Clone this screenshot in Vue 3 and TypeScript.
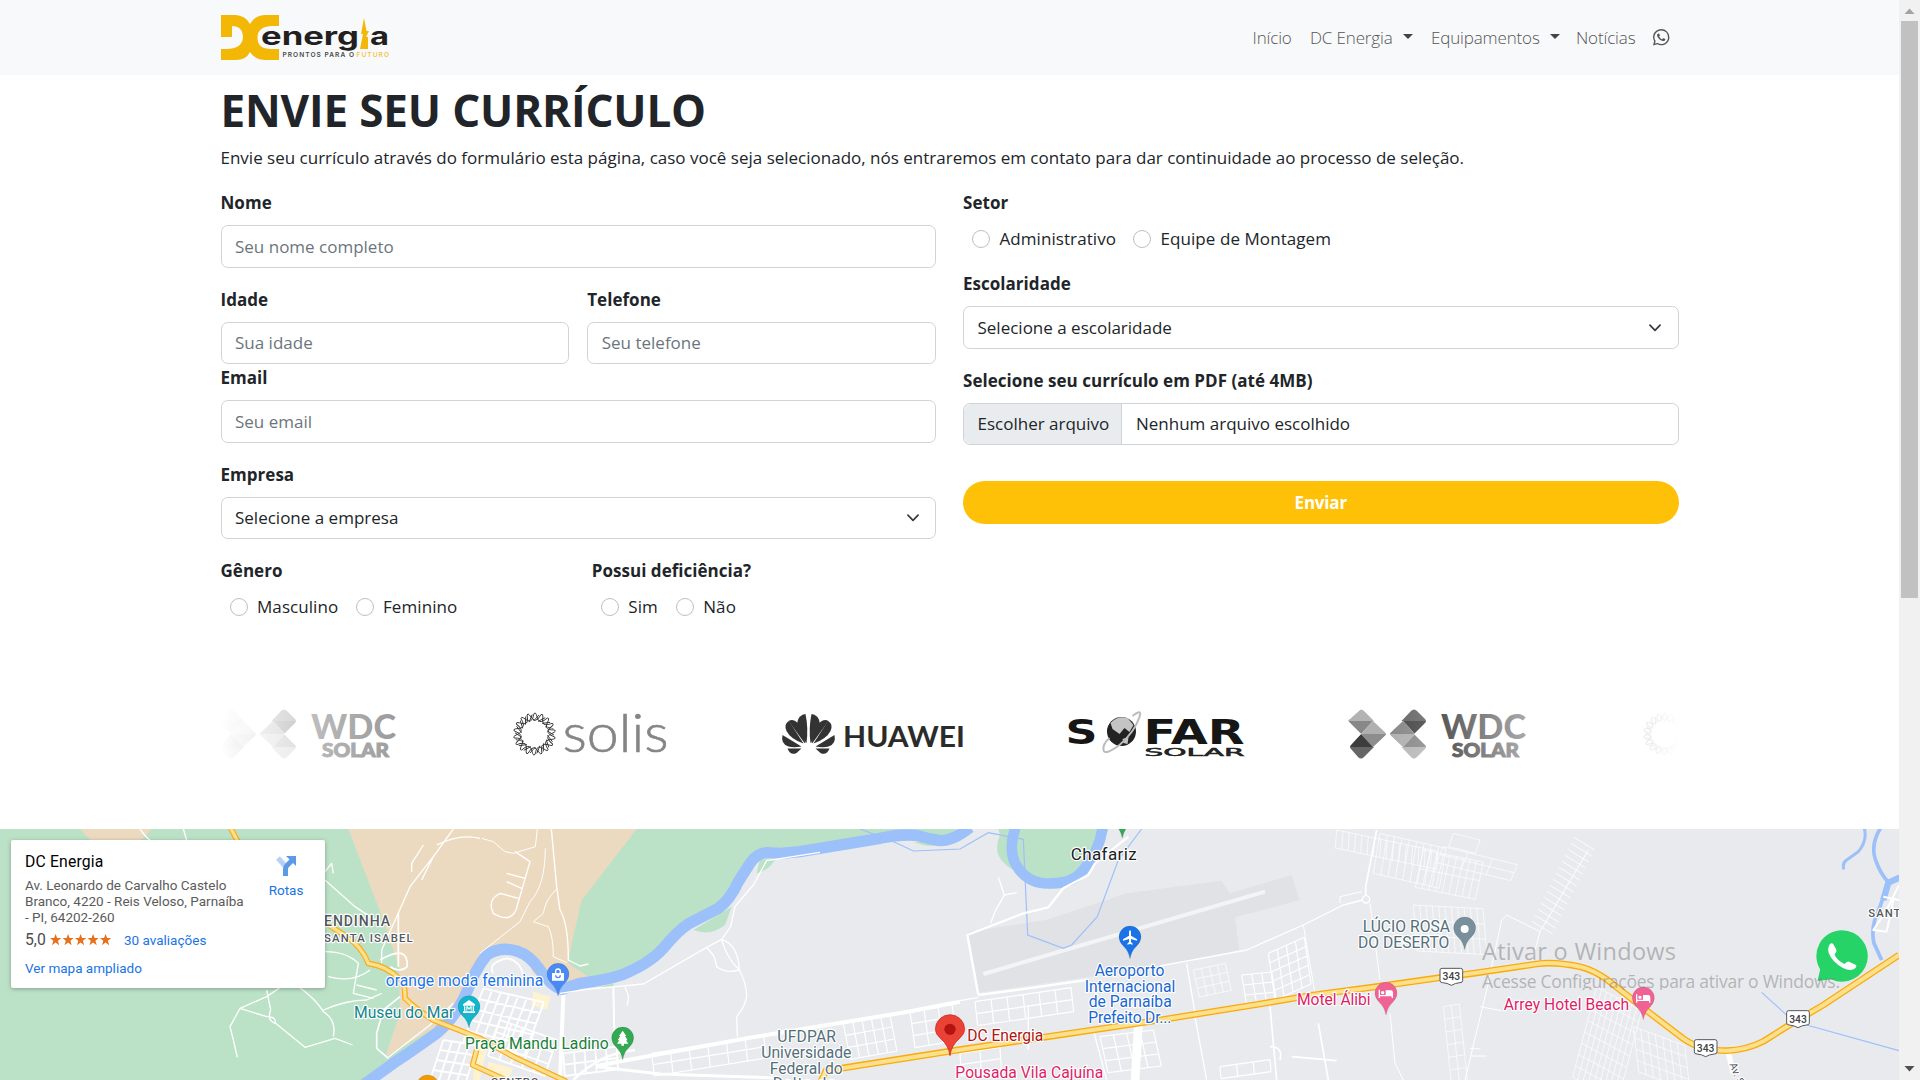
<script setup lang="ts">
interface Label {
  t: string
  x: number
  y: number
  w: number
  c: string
  s?: number
  b?: number
}

const highway =
  'M2460 790 L2478 752 L2880 689 L3130 652 L3480 600 L3780 552 L3940 525 L4130 500 L4320 473 L4420 460 L4610 432 Q4660 424 4740 440 Q4780 450 4820 478 L4940 572 L5050 656 Q5100 692 5180 692 Q5240 690 5290 664 L5360 620 L5470 555 L5697 405'

const oldRoads = [
  'M690 20 L716 70',
  'M975 308 L1040 350 Q1085 380 1105 430 Q1160 438 1200 478 Q1216 490 1215 535 Q1250 570 1300 600 L1440 655 L1540 710 L1700 785',
  'M1430 690 L1418 735 L1540 790',
]

const river =
  'M2910 22 Q2860 62 2820 62 Q2780 55 2750 46 Q2700 42 2640 55 L2400 95 L2340 100 L2300 98 Q2270 100 2250 130 L2215 185 Q2190 240 2155 265 L2065 312 Q2030 335 1990 385 Q1950 430 1870 463 Q1820 480 1740 490 L1685 508 Q1655 500 1620 450 Q1590 405 1550 393 Q1500 378 1460 405 Q1425 450 1405 505 Q1370 590 1310 640 Q1240 690 1180 730 L1090 795'

function grid(x: number, y: number, cols: number, rows: number, ax: number, ay: number, bx: number, by: number): string {
  let d = ''
  for (let i = 0; i <= cols; i++) d += `M${x + i * ax} ${y + i * ay}l${rows * bx} ${rows * by}`
  for (let j = 0; j <= rows; j++) d += `M${x + j * bx} ${y + j * by}l${cols * ax} ${cols * ay}`
  return d
}

const cityBlocks = [
  grid(1450, 505, 7, 5, 26, 6, -12, 32),
  grid(1330, 660, 4, 4, 26, 4, -10, 30),
  grid(1500, 600, 5, 3, 34, 12, -12, 36),
  grid(1690, 700, 5, 2, 32, -4, 2, 34),
]

const townBlocks = [
  grid(1955, 700, 6, 2, 56, -9, 4, 34),
  grid(2530, 610, 5, 3, 28, -5, 7, 36),
  grid(2730, 575, 3, 3, 42, -7, 5, 36),
  grid(2925, 545, 6, 2, 48, -7, 4, 36),
  grid(3300, 650, 4, 3, 40, -5, 8, 36),
  grid(2880, 700, 2, 2, 60, -9, 2, 34),
  grid(3725, 465, 3, 3, 30, -3, 5, 30),
  grid(3805, 400, 4, 5, 27, -12, 4, 28),
  grid(3660, 740, 3, 1, 50, -7, 3, 36),
]

const fineBlocks = [
  grid(4010, 30, 16, 1, 19, 4, -4, 54),
  grid(4140, 40, 9, 1, 22, 5, -20, 120),
  grid(4270, 90, 9, 2, 20, 4, -12, 56),
  grid(4360, 40, 1, 1, 80, 20, -14, 40),
  grid(4330, 80, 3, 2, 74, 18, -10, 24),
  grid(4240, 255, 11, 3, 19, 1, 4, 46),
  grid(3580, 450, 4, 3, 24, -5, 6, 27),
  grid(4790, 500, 9, 8, 15, 8, -9, 34),
  grid(4900, 620, 7, 4, 22, 8, 4, 34),
  grid(4330, 560, 2, 6, 24, -4, 4, 38),
]

const ribs = Array.from({ length: 15 }, (_, i) => `M${4722 - i * 9} ${52 + i * 18}l62 38`).join('')

const whiteRoads: { d: string; w: number }[] = [
  { d: 'M1790 738 L1870 722 L2240 655 L2500 612 L2720 576 L2880 545', w: 12 },
  { d: 'M1790 740 L1980 762 L2330 774', w: 9 },
  { d: 'M1680 520 L1760 508 L1930 492 L2120 382 L2165 358 L2192 320 L2205 260 L2260 195 L2300 122 L2460 97', w: 4 },
  { d: 'M2118 382 Q2145 400 2150 440 Q2180 462 2218 450 Q2180 415 2165 358 M2165 358 Q2215 375 2218 450 Q2240 490 2240 530 Q2235 560 2210 590 L2212 650', w: 4 },
  { d: 'M1840 500 L1843 640', w: 6 },
  { d: 'M1690 525 L1680 780', w: 12 },
  { d: 'M1720 780 Q1800 700 1905 690', w: 8 },
  { d: 'M1875 500 L1886 530 L1882 556', w: 4 },
  { d: 'M1654 27 L1670 200 L1680 270 Q1705 310 1705 420 L1740 438 L1765 432', w: 4 },
  { d: 'M1612 27 L1606 80 L1540 100 L1515 95 L1480 65 L1445 55', w: 3 },
  { d: 'M1636 85 Q1635 200 1590 245 L1560 305 L1440 400', w: 3 },
  { d: 'M1672 205 Q1635 240 1630 280 L1600 305 L1645 320 Q1660 350 1660 410 L1700 428', w: 3 },
  { d: 'M1545 95 L1590 125 L1548 270 Q1530 310 1480 280 Q1460 240 1500 220 L1555 235 M1520 160 L1575 175 M1520 185 L1565 205', w: 4 },
  { d: 'M1480 460 Q1460 430 1520 415 Q1560 420 1570 465', w: 5 },
  { d: 'M1360 27 L1300 110 L1230 200 L1190 290 L1145 390 L1145 430 M1270 75 L1235 130 L1235 155 M1300 110 L1265 180 M1440 55 Q1380 40 1310 75', w: 4 },
  { d: 'M420 27 Q440 55 455 65 M550 27 L560 60', w: 4 },
  { d: 'M975 155 L995 130 L1000 160 M975 180 L1065 260 L1140 310', w: 4 },
  { d: 'M1165 715 L1130 685 L1130 640 L1150 570 L1200 530', w: 5 },
  { d: 'M1165 712 L1290 615 L1360 550', w: 4 },
  { d: 'M840 503 L800 530 L720 565 L690 620 L700 660 L712 712 M720 565 L800 590 Q830 590 825 610 Q800 600 812 570 L800 510', w: 4 },
  { d: 'M825 608 L915 682 L1005 655 L1058 675 M900 503 Q950 540 970 575 Q1010 600 1000 650 M970 570 Q1040 540 1100 540 L1145 520', w: 4 },
  { d: 'M975 395 Q1040 395 1075 430 L1060 520 L1120 535 M985 470 Q1060 490 1110 450 M1070 495 L1130 510', w: 4 },
  { d: 'M1140 420 Q1225 370 1222 440 Q1200 460 1170 440 M1195 440 L1195 280', w: 5 },
  { d: 'M2935 525 L2902 345 L3070 280 L3145 262 L3190 205 L3265 165 L3285 130 L3385 50', w: 7 },
  { d: 'M2935 525 L3100 503 L3260 480', w: 7 },
  { d: 'M2880 542 L2935 532 M3480 438 L3740 390 L3910 315 L4030 255 L4100 237', w: 4 },
  { d: 'M2972 310 L2985 275 L3013 225 L2995 172 M3013 225 L3050 218', w: 4 },
  { d: 'M3415 615 L3405 785', w: 26 },
  { d: 'M3280 630 L3320 780 M3085 560 L3085 690 M3585 590 L3620 780 M3560 430 L3585 580', w: 4 },
  { d: 'M3810 560 L3830 780 M3955 610 L3985 780 M3875 710 L4010 722 M3810 680 Q3850 680 3840 720', w: 5 },
  { d: 'M4130 30 L4097 200 L4097 225', w: 5 },
  { d: 'M4110 250 L4140 480 M4170 580 L4185 730 L4210 780 M4020 230 L4085 215 M4020 230 L4020 250 M3910 315 L3945 520', w: 3 },
  { d: 'M4520 285 L4505 300 L4460 510 L4395 780 M4520 285 L4620 335 L4595 430 M4620 335 L4765 90', w: 3 },
  { d: 'M4410 708 L4460 708 M4410 685 L4440 687 M4440 560 L4505 572', w: 3 },
  { d: 'M5185 700 L5200 760', w: 16 },
  { d: 'M5697 195 L5660 270 L5620 330 L5660 335 L5680 240 M5650 230 L5697 240 M5640 280 L5697 290', w: 6 },
]

const blue = '#1a73e8'
const pink = '#e01e68'
const labels: Label[] = [
  { t: 'ENDINHA', x: 972, y: 318, w: 198, c: '#54595f', s: 42, b: 500 },
  { t: 'SANTA ISABEL', x: 972, y: 366, w: 266, c: '#54595f', s: 34, b: 500 },
  { t: 'orange moda feminina', x: 1157, y: 498, w: 473, c: blue },
  { t: 'Museu do Mar', x: 1062, y: 595, w: 301, c: '#12858d' },
  { t: 'Praça Mandu Ladino', x: 1395, y: 688, w: 431, c: '#188038' },
  { t: 'CENTRO', x: 1472, y: 799, w: 144, c: '#54595f', s: 34, b: 500 },
  { t: 'UFDPAR', x: 2332, y: 667, w: 176, c: '#546e7a' },
  { t: 'Universidade', x: 2284, y: 714, w: 270, c: '#546e7a' },
  { t: 'Federal do', x: 2309, y: 761, w: 219, c: '#546e7a' },
  { t: 'Delta do', x: 2318, y: 808, w: 190, c: '#546e7a' },
  { t: 'DC Energia', x: 2902, y: 663, w: 228, c: '#b31412' },
  { t: 'Pousada Vila Cajuína', x: 2866, y: 775, w: 444, c: pink },
  { t: 'Chafariz', x: 3212, y: 120, w: 198, c: '#202124', s: 51 },
  { t: 'Aeroporto', x: 3284, y: 468, w: 209, c: '#1967d2' },
  { t: 'Internacional', x: 3254, y: 515, w: 272, c: '#1967d2' },
  { t: 'de Parnaíba', x: 3266, y: 562, w: 249, c: '#1967d2' },
  { t: 'Prefeito Dr...', x: 3265, y: 609, w: 249, c: '#1967d2' },
  { t: 'Motel Álibi', x: 3891, y: 555, w: 221, c: pink },
  { t: 'LÚCIO ROSA', x: 4088, y: 337, w: 262, c: '#546e7a' },
  { t: 'DO DESERTO', x: 4074, y: 384, w: 274, c: '#546e7a' },
  { t: 'Arrey Hotel Beach', x: 4511, y: 570, w: 376, c: pink },
  { t: 'SANTO', x: 5605, y: 292, w: 122, c: '#54595f', s: 34, b: 500 },
]

const pins: { x: number; y: number; c: string; k: string }[] = [
  { x: 1407, y: 560, c: '#12b5cb', k: 'museum' },
  { x: 1674, y: 463, c: '#4a8af4', k: 'bag' },
  { x: 1868, y: 654, c: '#34a853', k: 'tree' },
  { x: 3390, y: 351, c: '#1a73e8', k: 'plane' },
  { x: 4158, y: 520, c: '#f06292', k: 'bed' },
  { x: 4930, y: 534, c: '#f06292', k: 'bed' },
  { x: 4394, y: 324, c: '#78909c', k: 'dot' },
  { x: 3367, y: -11, c: '#34a853', k: '' },
  { x: 1283, y: 798, c: '#f29900', k: '' },
]

const shields = [
  { x: 4354, y: 470 },
  { x: 5117, y: 684 },
  { x: 5394, y: 597 },
]

const sunRays = Array.from({ length: 18 }, (_, i) => i * 20)
</script>

<template>
  <div class="window">
    <div class="page">
      <header class="navbar">
        <div class="container nav-row">
          <svg class="brand" viewBox="0 0 168 45" role="img" aria-label="DC Energia">
            <path
              fill="#f3b705"
              d="M0 0H15Q25 1 29 9Q34 0 45 0H58V11H50Q36.500 12 36.500 22.500Q36.500 34 50 34H58V45H45Q34 45 29 37Q25 45 15 45H0V34H5Q21.500 34 22 22Q21.500 11 11 11V22H0Z"
            />
            <text x="40" y="30" class="brand-name" textLength="98" lengthAdjust="spacingAndGlyphs">energ</text>
            <path fill="#f3b705" d="M143 3L140 19H142L139 34H147V22H145L148 16H145.500Z" />
            <text x="149" y="30" class="brand-name" textLength="19" lengthAdjust="spacingAndGlyphs">a</text>
            <text x="61.500" y="42" class="brand-tag" textLength="71.500">PRONTOS PARA O</text>
            <text x="135.500" y="42" class="brand-tag gold" textLength="32.500">FUTURO</text>
          </svg>
          <nav class="links">
            <a class="link l1">Início</a>
            <a class="link l2">DC Energia<i class="caret"></i></a>
            <a class="link l3">Equipamentos<i class="caret"></i></a>
            <a class="link l4">Notícias</a>
            <svg class="wa-mini" viewBox="0 0 16 16" fill="#555">
              <path
                d="M13.601 2.326A7.854 7.854 0 0 0 7.994 0C3.627 0 .068 3.558.064 7.926c0 1.399.366 2.760 1.057 3.965L0 16l4.204-1.102a7.933 7.933 0 0 0 3.790.965h.004c4.368 0 7.926-3.558 7.930-7.930A7.898 7.898 0 0 0 13.600 2.326zM7.994 14.521a6.573 6.573 0 0 1-3.356-.920l-.240-.144-2.494.654.666-2.433-.156-.251a6.560 6.560 0 0 1-1.007-3.505c0-3.626 2.957-6.584 6.591-6.584a6.560 6.560 0 0 1 4.660 1.931 6.557 6.557 0 0 1 1.928 4.660c-.004 3.639-2.961 6.592-6.592 6.592zm3.615-4.934c-.197-.099-1.170-.578-1.353-.646-.182-.065-.315-.099-.445.099-.133.197-.513.646-.627.775-.114.133-.232.148-.430.050-.197-.100-.836-.308-1.592-.985-.590-.525-.985-1.175-1.103-1.372-.114-.198-.011-.304.088-.403.087-.088.197-.232.296-.346.100-.114.133-.198.198-.330.065-.134.034-.248-.015-.347-.050-.099-.445-1.076-.612-1.470-.160-.389-.323-.335-.445-.340-.114-.007-.247-.007-.380-.007a.729.729 0 0 0-.529.247c-.182.198-.691.677-.691 1.654 0 .977.710 1.916.810 2.049.098.133 1.394 2.132 3.383 2.992.470.205.840.326 1.129.418.475.152.904.129 1.246.080.380-.058 1.171-.480 1.338-.943.164-.464.164-.860.114-.943-.049-.084-.182-.133-.380-.232z"
              />
            </svg>
          </nav>
        </div>
      </header>

      <main class="container content">
        <h1>ENVIE SEU CURRÍCULO</h1>
        <p class="lead">Envie seu currículo através do formulário esta página, caso você seja selecionado, nós entraremos em contato para dar continuidade ao processo de seleção.</p>
        <form class="columns">
          <section class="col">
            <div class="field">
              <label>Nome</label>
              <input class="control" placeholder="Seu nome completo" />
            </div>
            <div class="pair">
              <div>
                <label>Idade</label>
                <input class="control" placeholder="Sua idade" />
              </div>
              <div>
                <label>Telefone</label>
                <input class="control" placeholder="Seu telefone" />
              </div>
            </div>
            <div class="field">
              <label>Email</label>
              <input class="control" placeholder="Seu email" />
            </div>
            <div class="field">
              <label>Empresa</label>
              <div class="control select">
                <span>Selecione a empresa</span>
                <svg viewBox="0 0 16 16"><path d="m2 5 6 6 6-6" /></svg>
              </div>
            </div>
            <div class="halves">
              <div>
                <label>Gênero</label>
                <div class="radios">
                  <span class="opt w126"><i></i>Masculino</span>
                  <span class="opt"><i></i>Feminino</span>
                </div>
              </div>
              <div>
                <label>Possui deficiência?</label>
                <div class="radios">
                  <span class="opt w75"><i></i>Sim</span>
                  <span class="opt"><i></i>Não</span>
                </div>
              </div>
            </div>
          </section>
          <section class="col">
            <div class="field">
              <label>Setor</label>
              <div class="radios">
                <span class="opt w161"><i></i>Administrativo</span>
                <span class="opt"><i></i>Equipe de Montagem</span>
              </div>
            </div>
            <div class="field">
              <label>Escolaridade</label>
              <div class="control select">
                <span>Selecione a escolaridade</span>
                <svg viewBox="0 0 16 16"><path d="m2 5 6 6 6-6" /></svg>
              </div>
            </div>
            <div class="field">
              <label>Selecione seu currículo em PDF (até 4MB)</label>
              <div class="control file">
                <span class="pick">Escolher arquivo</span>
                <span class="none">Nenhum arquivo escolhido</span>
              </div>
            </div>
            <button type="button" class="send">Enviar</button>
          </section>
        </form>
      </main>

      <div class="container partners">
        <svg class="logos" viewBox="220.500 690 1458 90">
          <defs>
            <linearGradient id="fadeL" gradientUnits="userSpaceOnUse" x1="220" x2="512" y1="0" y2="0">
              <stop offset="0" stop-color="#fff" />
              <stop offset="1" stop-color="#fff" stop-opacity="0" />
            </linearGradient>
            <linearGradient id="fadeR" gradientUnits="userSpaceOnUse" x1="1387" x2="1679" y1="0" y2="0">
              <stop offset="0" stop-color="#fff" stop-opacity="0" />
              <stop offset="1" stop-color="#fff" />
            </linearGradient>
            <linearGradient id="ink" x1="0" x2="1" y1="0" y2="0">
              <stop offset="0" stop-color="#303030" />
              <stop offset="1" stop-color="#5a5a5a" />
            </linearGradient>
            <clipPath id="wdcClip">
              <path d="M3 26L-1 22Q-3 20 0 19L9 11Q11 8 14 11L35 32Q37 34 35 36L14 57Q11 60 8 57L1 49Q-1 47 1 45L11 34ZM75 19Q77 21 75 23L64 34L75 45Q77 47 75 49L67 57Q64 60 61 57L41 36Q39 34 41 32L61 11Q64 8 67 11Z" />
            </clipPath>
            <g id="wdc">
              <g clip-path="url(#wdcClip)">
                <path fill="#b3b3b3" d="M-2 8H25V21H-2Z" />
                <path fill="#888" d="M-2 21H23L11 34Z" />
                <path fill="#b0b0b0" d="M23 21L37 34H11Z" />
                <path fill="#8d8d8d" d="M11 34H37L23 47Z" />
                <path fill="#3d3d3d" d="M11 34L23 47H-3Z" />
                <path fill="#666" d="M-2 47H25V60H-2Z" />
                <path fill="#666" d="M50 8H79V21H50Z" />
                <path fill="#464646" d="M53 21H79L65 34Z" />
                <path fill="#888" d="M53 21L39 34H65Z" />
                <path fill="#b0b0b0" d="M39 34H65L53 47Z" />
                <path fill="#8a8a8a" d="M65 34L53 47H79Z" />
                <path fill="#b8b8b8" d="M50 47H79V60H50Z" />
              </g>
              <text x="91" y="39" class="wdc-a" textLength="85" lengthAdjust="spacingAndGlyphs">WDC</text>
              <text x="102" y="57" class="wdc-b" textLength="67" lengthAdjust="spacingAndGlyphs">SOLAR</text>
            </g>
            <g id="sun" fill="none" stroke="#333" stroke-width=".9">
              <path v-for="a in sunRays" :key="a" :transform="`rotate(${a})`" d="M-4 -13Q-1.500 -14 -.500 -20.500Q1 -22 1.800 -19.500Q3 -14 5 -12.500M-1 -13L4.500 -19" />
            </g>
          </defs>
          <use href="#wdc" x="219.500" y="700" />
          <use href="#sun" x="534" y="734" />
          <text x="562" y="751.500" class="solis" textLength="106" lengthAdjust="spacingAndGlyphs">solis</text>
          <g fill="#333">
            <path d="M804 743L788 721Q793 718 798 724L805 743Z" />
            <g v-for="m in ['1 0 0 1 0 0', '-1 0 0 1 1616 0']" :key="m" :transform="`matrix(${m.split(' ').join(',')})`">
              <path d="M806 743C797 734 794 724 799 717Q802 714 805 714Q808 728 806 743Z" />
              <path d="M803 743.500L788.500 721Q783 724 786 731Q790 739 803 743.500Z" />
              <path d="M801 746.500L782 735Q780 744 788 746.500Q793 748 801 746.500Z" />
              <path d="M801 748.500H787Q790 756 796 753Z" />
            </g>
            <path d="M812 743L828 721Q823 718 818 724L811 743Z" />
          </g>
          <text x="842.500" y="747" class="huawei" textLength="122" lengthAdjust="spacingAndGlyphs">HUAWEI</text>
          <text x="1065" y="744" class="sofar" textLength="32" lengthAdjust="spacingAndGlyphs">S</text>
          <circle cx="1121" cy="731.500" r="14.500" fill="#222" />
          <path fill="#c4c4c4" d="M1110 723Q1117 715 1127 718L1133 725L1129 732L1124 728L1119 734L1112 729ZM1122 739L1128 737L1127 744L1123 743Z" />
          <path fill="none" stroke="#bbb" stroke-width="2" d="M1132 716Q1142 708 1139 717Q1134 732 1119 745Q1104 756 1103 750Q1102 744 1109 738" />
          <text x="1143" y="744" class="sofar" textLength="101" lengthAdjust="spacingAndGlyphs">FAR</text>
          <text x="1144" y="756" class="sofar-b" textLength="100" lengthAdjust="spacingAndGlyphs">SOLAR</text>
          <use href="#wdc" x="1349.500" y="700" />
          <use href="#sun" x="1664" y="734" />
          <rect x="220" y="690" width="292" height="90" fill="url(#fadeL)" />
          <rect x="1387" y="690" width="292" height="90" fill="url(#fadeR)" />
        </svg>
      </div>

      <section class="map">
        <svg class="tiles" viewBox="0 27 5697 753">
          <path fill="#e8eaed" d="M0 0H5697V790H0Z" />
          <path fill="#bbe2c6" d="M0 0H2910L2820 62L2700 42L2400 95L2300 98L2215 185L2155 265L2065 312L1990 385L1870 463L1740 490L1685 508L1620 450L1550 393L1460 405L1405 505L1310 640L1090 795H0Z" />
          <path fill="#bbe2c6" d="M2080 330Q2130 350 2175 315L2195 260ZM2270 160Q2310 150 2325 118H2280ZM2740 65Q2800 90 2850 65ZM1800 500H1840V490Z" />
          <path fill="#ecdac0" d="M240 27H455L430 55L350 90L270 60ZM1045 27L1150 300L1197 440L1200 580L1155 712L1300 625L1380 545L1440 420L1500 370L1560 380L1600 460L1650 500L1765 470L1705 430L1715 370L1745 240L1910 27Z" />
          <path fill="#bbe2c6" d="M2995 27H3325Q3280 180 3140 190Q3080 180 3040 150Q2970 110 3000 45Z" />
          <path fill="#e1e2e5" d="M2905 335L3140 300L3380 220L3665 182L3690 220L3875 165L3900 240L3705 292L3718 390L3520 435L2935 518Z" />
          <path d="M2950 462L3795 215" stroke="#f3f4f5" stroke-width="12" />
          <g fill="none" stroke="#9cc0f9">
            <path :d="river" stroke-width="34" />
            <path d="M3047 20Q3020 100 3055 145Q3090 195 3155 190Q3220 190 3250 150Q3300 90 3308 20" stroke-width="32" />
            <path d="M2580 27L2670 60L2740 93L2880 87L2965 38L3070 58L3083 345L3190 385L3215 375L3292 290L3355 120L3425 27" stroke-width="3.500" />
            <path d="M5285 517L5365 590M5420 615L5697 692" stroke-width="3.500" />
            <path d="M5592 22Q5604 60 5575 95L5540 120Q5525 130 5532 148" stroke-width="9" />
            <path d="M5643 22Q5612 70 5625 115Q5640 160 5665 187L5640 260Q5610 320 5622 370L5645 420" stroke-width="11" />
            <path d="M5700 172L5665 188L5650 240" stroke-width="19" />
          </g>
          <path fill="#fef3d0" d="M1600 515L1652 530L1640 570L1595 555ZM1440 650L1460 690L1440 780H1420V700ZM1465 725L1540 745L1525 775L1460 760Z" />
          <g fill="none" stroke="#fff">
            <path v-for="(d, i) in cityBlocks" :key="'c' + i" :d="d" stroke-width="5.500" />
            <path v-for="(d, i) in townBlocks" :key="'t' + i" :d="d" stroke-width="3.500" />
            <path v-for="(d, i) in fineBlocks" :key="'f' + i" :d="d" stroke-width="2" />
            <path :d="ribs" stroke-width="2.500" />
            <path v-for="(r, i) in whiteRoads" :key="'w' + i" :d="r.d" :stroke-width="r.w" stroke-linejoin="round" />
            <circle cx="4098" cy="238" r="11" stroke-width="4" fill="#e8eaed" />
          </g>
          <g fill="none" stroke-linejoin="round">
            <path v-for="(d, i) in oldRoads" :key="'o' + i" :d="d" stroke="#f9ab1a" stroke-width="17" />
            <path v-for="(d, i) in oldRoads" :key="'p' + i" :d="d" stroke="#fddf8c" stroke-width="10" />
            <path :d="highway" stroke="#f9ab0a" stroke-width="20" />
            <path :d="highway" stroke="#fde08e" stroke-width="12" />
          </g>
          <g v-for="s in shields" :key="s.x" :transform="`translate(${s.x} ${s.y})`">
            <path d="M-28 -25H28Q34 -25 34 -19V12Q34 18 26 18Q12 19 0 26Q-12 19 -26 18Q-34 18 -34 12V-19Q-34 -25 -28 -25Z" fill="#fff" stroke="#54585d" stroke-width="3" />
            <text y="11" text-anchor="middle" class="shield">343</text>
          </g>
          <text transform="translate(5188 733) rotate(68)" class="place" font-size="32" fill="#54595f">Av. São</text>
          <text
            v-for="l in labels"
            :key="l.t"
            class="place"
            :x="l.x"
            :y="l.y"
            :textLength="l.w"
            :font-size="l.s ?? 47"
            :font-weight="l.b ?? 400"
            :fill="l.c"
          >{{ l.t }}</text>
          <g v-for="(p, i) in pins" :key="'pin' + i" :transform="`translate(${p.x} ${p.y})`">
            <path :fill="p.c" stroke="#000" stroke-opacity=".15" stroke-width="2" d="M0 65Q-4 42 -20 27Q-33 14 -33 0A33 33 0 0 1 33 0Q33 14 20 27Q4 42 0 65Z" />
            <path v-if="p.k === 'museum'" fill="#fff" d="M-18 -7L0 -20L18 -7V-3H-18ZM-15 -1H-11V13H-15ZM11 -1H15V13H11ZM-18 14H18V19H-18ZM-8 12V-1H-4L0 5L4 -1H8V12H5V4L0 10L-5 4V12Z" />
            <path v-if="p.k === 'bag'" fill="#fff" fill-rule="evenodd" d="M-18 -4H-9V-8A9 10 0 0 1 9 -8V-4H18V19H-18ZM-5 -4H5V-8A5 6 0 0 0 -5 -8ZM-9 3A9 9 0 0 0 9 3H5A5 5 0 0 1 -5 3Z" />
            <path v-if="p.k === 'tree'" fill="#fff" d="M0 -22L11 -6H7L15 7H10L17 17H4V23H-4V17H-17L-10 7H-15L-7 -6H-11Z" />
            <path v-if="p.k === 'plane'" fill="#fff" d="M0 -20Q3 -20 3 -14V-4L21 7V11L3 6V15L8 20V23L0 21L-8 23V20L-3 15V6L-21 11V7L-3 -4V-14Q-3 -20 0 -20Z" />
            <path v-if="p.k === 'bed'" fill="#fff" d="M-22 -11H-18V5H-1V-9H14Q21 -9 21 -2V14H17V9H-18V14H-22ZM-15 -2A5 5 0 1 1 -5 -2A5 5 0 1 1 -15 -2Z" />
            <circle v-if="p.k === 'dot'" r="12" cy="3" fill="#fff" />
          </g>
          <path fill="#ea4335" stroke="#c5221f" stroke-width="2" d="M2850 707Q2846 676 2822 656Q2806 642 2806 628A44 44 0 0 1 2894 628Q2894 642 2878 656Q2854 676 2850 707Z" />
          <circle cx="2850" cy="628" r="17" fill="#b31412" />
        </svg>

        <div class="place-card">
          <div class="info">
            <strong>DC Energia</strong>
            <address>Av. Leonardo de Carvalho Castelo<br />Branco, 4220 - Reis Veloso, Parnaíba<br />- PI, 64202-260</address>
            <div class="rating">
              <span class="score">5,0</span>
              <svg class="stars" viewBox="0 0 60 12" fill="#e7711b">
                <path v-for="n in 5" :key="n" :transform="`translate(${(n - 1) * 12.300} 0)`" d="M5.500 0L7 4H11L7.800 6.600L9 11L5.500 8.400L2 11L3.200 6.600L0 4H4Z" />
              </svg>
              <a>30 avaliações</a>
            </div>
            <a class="bigger">Ver mapa ampliado</a>
          </div>
          <div class="routes">
            <svg viewBox="0 0 20 20">
              <path d="M2 2L9 10" stroke="#b5d2f6" stroke-width="5" />
              <path d="M9.500 20V13Q9.500 11 11 9.500L16 4.500" fill="none" stroke="#5c9ae6" stroke-width="5" />
              <path d="M10 0H20V10Z" fill="#5c9ae6" />
            </svg>
            <a>Rotas</a>
          </div>
        </div>

        <svg class="wa-float" viewBox="0 0 52 52">
          <path fill="#25d366" d="M26 .300A25.700 25.700 0 1 1 15 49.200L1.500 51L4.200 39.500A25.700 25.700 0 0 1 26 .300Z" />
          <path fill="#fff" d="M14 14Q16 12.500 17.500 14.500L20.500 20Q21 22 18.500 24.500Q21 30.500 28.500 34Q30.500 31.500 32.500 31.500L40 35Q41 36.500 39.500 38Q35 42 27 38Q16 32 12.500 22.500Q11.500 17 14 14Z" />
        </svg>

        <svg class="activate" viewBox="0 0 370 50">
          <text x="0" y="20" font-size="23.500" textLength="194">Ativar o Windows</text>
          <text x="0" y="48" font-size="17.500" textLength="358">Acesse Configurações para ativar o Windows.</text>
        </svg>
      </section>
    </div>

    <aside class="scrollbar">
      <svg viewBox="0 0 21 21"><path d="M5.500 14L10.500 8.500L15.500 14Z" fill="#a3a3a3" /></svg>
      <div class="thumb"></div>
      <svg class="down" viewBox="0 0 21 21"><path d="M5.500 7L10.500 12.500L15.500 7Z" fill="#505050" /></svg>
    </aside>
  </div>
</template>

<style>
body {
  margin: 0;
  overflow: hidden;
}
</style>

<style scoped>
* {
  box-sizing: border-box;
}
.window {
  display: flex;
  width: 1920px;
  height: 1080px;
  overflow: hidden;
  background: #fff;
  color: #212529;
  font-family: 'Open Sans', 'Noto Sans', sans-serif;
  font-size: 17px;
  line-height: 27px;
}
.page {
  width: 1899px;
  height: 1080px;
  display: flex;
  flex-direction: column;
}
.container {
  width: 1458px;
  margin-left: 220.5px;
}
.navbar {
  height: 75px;
  flex: none;
  background: #f8f9fb;
}
.nav-row {
  display: flex;
  justify-content: space-between;
  align-items: center;
  height: 75px;
}
.brand {
  width: 168px;
  height: 45px;
}
.brand-name {
  font: 700 25px Inter, sans-serif;
  fill: #231f20;
}
.brand-tag {
  font: 600 6.6px Inter, sans-serif;
  fill: #4a4a4a;
}
.brand-tag.gold {
  font-weight: 500;
  fill: #f0c030;
}
.links {
  display: flex;
  align-items: center;
  width: 426px;
}
.link {
  display: flex;
  align-items: center;
  font-weight: 300;
  color: #555;
  letter-spacing: -0.15px;
  white-space: nowrap;
}
.l1 {
  width: 57.5px;
}
.l2 {
  width: 121px;
}
.l3 {
  width: 145px;
}
.l4 {
  width: 77px;
}
.caret {
  margin-left: 10px;
  margin-top: -3px;
  border: 5.4px solid transparent;
  border-top-color: #444;
  border-bottom: 0;
}
.wa-mini {
  width: 16.5px;
  height: 16.5px;
}
.content {
  height: 615px;
  flex: none;
  padding-top: 8px;
}
h1 {
  margin: 0 0 7px;
  font-size: 44px;
  font-weight: 700;
  line-height: 54px;
  height: 54px;
  white-space: nowrap;
  letter-spacing: -0.15px;
}
.lead {
  margin: 0 0 18px;
  white-space: nowrap;
}
.columns {
  display: flex;
  gap: 27px;
}
.col {
  width: 715.5px;
}
.field {
  margin-bottom: 18px;
}
label {
  display: block;
  height: 27px;
  margin-bottom: 9px;
  font-weight: 700;
  white-space: nowrap;
  letter-spacing: 0.03px;
}
.control {
  display: flex;
  align-items: center;
  width: 100%;
  height: 42.5px;
  padding: 0 13.5px;
  border: 1px solid #ced4da;
  border-radius: 6.75px;
  background: #fff;
  color: #212529;
  font: inherit;
  line-height: 27px;
  outline: none;
}
.control::placeholder {
  color: #6c757d;
  opacity: 1;
}
.pair {
  display: flex;
  gap: 18px;
}
.pair > div {
  flex: 1;
}
.select {
  justify-content: space-between;
}
.select svg {
  width: 18px;
  height: 13.5px;
  fill: none;
  stroke: #343a40;
  stroke-width: 2;
  stroke-linecap: round;
  stroke-linejoin: round;
}
.file {
  padding: 0;
  overflow: hidden;
}
.pick {
  width: 158px;
  height: 100%;
  padding: 6.5px 0 0 13.5px;
  background: #e9ecef;
  border-right: 1px solid #ced4da;
  white-space: nowrap;
}
.none {
  padding-left: 14px;
}
.halves {
  display: flex;
}
.halves > div {
  flex: none;
  width: 371.25px;
}
.halves > div:last-child {
  width: 344px;
}
.radios {
  display: flex;
  height: 27px;
  padding-left: 9px;
}
.opt {
  display: flex;
  align-items: center;
  white-space: nowrap;
  letter-spacing: 0.07px;
}
.opt i {
  width: 18px;
  height: 18px;
  margin-right: 9.5px;
  border: 1px solid #bfbfbf;
  border-radius: 50%;
}
.w126 {
  width: 126px;
}
.w75 {
  width: 75px;
}
.w161 {
  width: 161px;
}
.send {
  display: block;
  width: 100%;
  height: 42.5px;
  margin-top: 36px;
  border: 0;
  border-radius: 22px;
  background: #ffc107;
  color: #fff;
  font: 700 17px/27px 'Open Sans', sans-serif;
  letter-spacing: -0.2px;
}
.partners {
  height: 139px;
  flex: none;
}
.logos {
  display: block;
  width: 1458px;
  height: 90px;
}
.wdc-a {
  font: 900 34px Lato, sans-serif;
  fill: url(#ink);
}
.wdc-b {
  font: 900 18.5px Lato, sans-serif;
  fill: url(#ink);
  stroke: url(#ink);
  stroke-width: 1;
}
.solis {
  font: 300 53px Lato, sans-serif;
  fill: #858585;
  stroke: #858585;
  stroke-width: 0.6;
}
.huawei {
  font: 700 28px Lato, sans-serif;
  fill: #2b2b2b;
}
.sofar {
  font: 700 34px 'DejaVu Sans', sans-serif;
  fill: #161616;
}
.sofar-b {
  font: 400 11px 'DejaVu Sans', sans-serif;
  fill: #222;
  stroke: #222;
  stroke-width: 0.5;
}
.map {
  position: relative;
  height: 251px;
  flex: none;
  overflow: hidden;
  font-family: Roboto, sans-serif;
}
.tiles {
  display: block;
  width: 1899px;
  height: 251px;
}
.place {
  font-family: Roboto, sans-serif;
  paint-order: stroke;
  stroke: #fff;
  stroke-width: 7px;
  stroke-linejoin: round;
}
.shield {
  font: 500 31px Roboto, sans-serif;
  fill: #3c4043;
}
.place-card {
  position: absolute;
  left: 11px;
  top: 11px;
  width: 314px;
  height: 148px;
  padding: 12px 14px 0;
  display: flex;
  justify-content: space-between;
  background: #fff;
  border-radius: 2px;
  box-shadow: 0 1px 4px rgba(0, 0, 0, 0.3);
  font-size: 13.5px;
  line-height: 16px;
}
.info {
  display: flex;
  flex-direction: column;
  white-space: nowrap;
}
.info strong {
  font-size: 15.75px;
  font-weight: 400;
  line-height: 20px;
  letter-spacing: 0.15px;
  color: #000;
}
address {
  margin-top: 5px;
  font-style: normal;
  color: #5b5b5b;
}
.place-card a {
  color: #1a73e8;
}
.rating {
  display: flex;
  align-items: center;
  height: 18px;
  margin-top: 6px;
}
.score {
  width: 25px;
  font-size: 15.75px;
  color: #4d4d4d;
}
.stars {
  width: 61px;
  height: 12.2px;
  overflow: visible;
}
.rating a {
  margin-left: 13px;
}
.bigger {
  margin-top: 11px;
}
.routes {
  display: flex;
  flex-direction: column;
  align-items: center;
  width: 50px;
  padding-top: 4px;
}
.routes svg {
  width: 20px;
  height: 20px;
  margin-bottom: 6px;
}
.wa-float {
  position: absolute;
  left: 1816px;
  top: 101px;
  width: 52px;
  height: 52px;
}
.activate {
  position: absolute;
  left: 1481.5px;
  top: 111px;
  width: 370px;
  height: 50px;
  fill: rgba(125, 125, 125, 0.5);
  font-family: 'Open Sans', sans-serif;
}
.scrollbar {
  display: flex;
  flex-direction: column;
  align-items: center;
  width: 21px;
  height: 1080px;
  background: #f1f1f1;
}
.scrollbar svg {
  width: 21px;
  height: 21px;
  flex: none;
}
.thumb {
  width: 17px;
  height: 577px;
  background: #c1c1c1;
}
.scrollbar .down {
  margin-top: auto;
}
</style>
